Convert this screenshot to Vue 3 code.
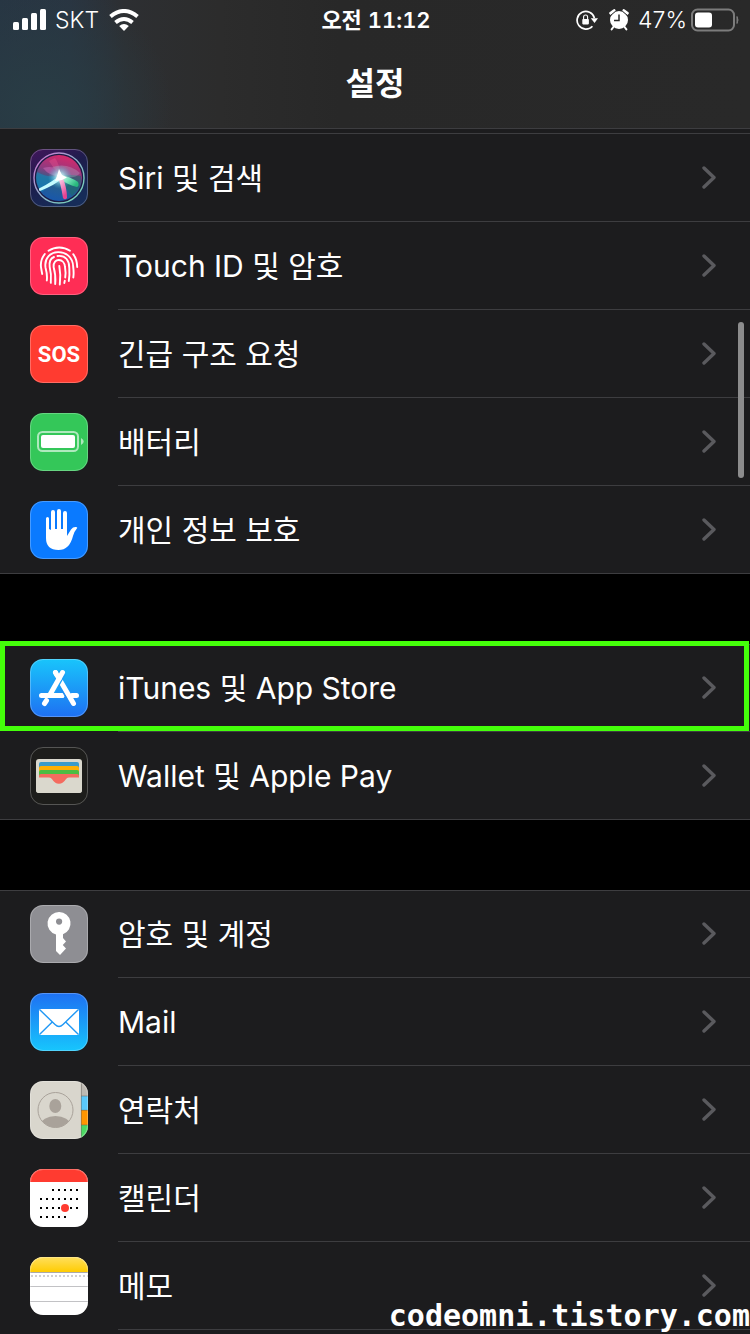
<script setup>
const groups = [
  [
    { id: 'siri', label: 'Siri 및 검색' },
    { id: 'touch', label: 'Touch ID 및 암호' },
    { id: 'sos', label: '긴급 구조 요청' },
    { id: 'battery', label: '배터리' },
    { id: 'privacy', label: '개인 정보 보호' }
  ],
  [
    { id: 'store', label: 'iTunes 및 App Store', marked: true },
    { id: 'wallet', label: 'Wallet 및 Apple Pay' }
  ],
  [
    { id: 'key', label: '암호 및 계정' },
    { id: 'mail', label: 'Mail' },
    { id: 'contacts', label: '연락처' },
    { id: 'calendar', label: '캘린더' },
    { id: 'notes', label: '메모' }
  ]
]
const calendarDots = [
  [23, 29, 35, 41, 47],
  [11, 17, 23, 29, 35, 41, 47],
  [11, 17, 23, 29, 41, 47],
  [11, 17, 23, 29, 35]
]
</script>

<template>
  <div class="phone">
    <header class="top">
      <div class="status">
        <div class="side">
          <svg width="34" height="22" viewBox="0 0 34 22" fill="#fff" aria-hidden="true">
            <rect x="0" y="13" width="6" height="8" rx="1.5" />
            <rect x="9" y="9" width="6" height="12" rx="1.5" />
            <rect x="18" y="4" width="6" height="17" rx="1.5" />
            <rect x="27" y="0" width="6" height="21" rx="1.5" />
          </svg>
          <span class="carrier">SKT</span>
          <svg width="30" height="22" viewBox="0 0 30 22" aria-hidden="true">
            <g fill="none" stroke="#fff" stroke-width="4">
              <path d="M1.5 7.5 Q15 -3.5 28.5 7.5" />
              <path d="M6.5 13.5 Q15 6.5 23.5 13.5" />
            </g>
            <path d="M10.2 17 Q15 13.2 19.8 17 L15 22 Z" fill="#fff" />
          </svg>
        </div>
        <time class="clock">오전 11:12</time>
        <div class="side right">
          <svg class="lock" width="22" height="22" viewBox="0 0 22 22" aria-hidden="true">
            <path d="M16.4 17.2 A8.8 8.8 0 1 1 18.4 9" fill="none" stroke="#fff" stroke-width="1.7" />
            <path d="M14.8 9.2 H22 L18.5 14 Z" fill="#fff" />
            <rect x="6.3" y="10" width="6.6" height="5.4" rx="0.8" fill="#fff" />
            <path d="M7.6 10 V8 A2 2 0 0 1 11.6 8 V10" fill="none" stroke="#fff" stroke-width="1.1" />
          </svg>
          <svg class="alarm" width="20" height="22" viewBox="0 0 20 22" aria-hidden="true">
            <circle cx="10" cy="11" r="9" fill="#fff" />
            <path d="M1.8 4.2 L5.2 1.8 M18.2 4.2 L14.8 1.8" stroke="#fff" stroke-width="3.2" stroke-linecap="round" />
            <path d="M1.2 6.8 L7 1.8 M18.8 6.8 L13 1.8" stroke="#292929" stroke-width="1" />
            <path d="M4.4 18 L2.6 20.4 M15.6 18 L17.4 20.4" stroke="#fff" stroke-width="2" stroke-linecap="round" />
            <path d="M10 5.5 V11.5 H5" fill="none" stroke="#292929" stroke-width="1.5" />
          </svg>
          <span class="carrier">47%</span>
          <svg class="cell" width="48" height="24" viewBox="0 0 48 24" aria-hidden="true">
            <rect x="1" y="1.5" width="42" height="21" rx="5.5" fill="none" stroke="#7c7c7c" stroke-width="2" />
            <rect x="4" y="4.5" width="17" height="15" rx="3" fill="#fff" />
            <path d="M46 8.5 Q48 12 46 15.5 Z" fill="#7c7c7c" stroke="#7c7c7c" />
          </svg>
        </div>
      </div>
      <h1>설정</h1>
    </header>

    <main>
      <div class="peek"></div>
      <ul v-for="(group, g) in groups" :key="g" class="group">
        <li v-for="row in group" :key="row.id" :class="{ marked: row.marked }">
          <a href="#" class="row">
            <svg class="icon" viewBox="0 0 58 58" aria-hidden="true">
              <g v-if="row.id === 'siri'">
                <defs>
                  <linearGradient id="siriBack" x1="0" y1="0" x2="0.5" y2="1">
                    <stop offset="0" stop-color="#43155c" /><stop offset="0.5" stop-color="#1d1d4c" /><stop offset="1" stop-color="#162c58" />
                  </linearGradient>
                  <linearGradient id="siriOrb" x1="0.6" y1="0" x2="0.35" y2="1">
                    <stop offset="0" stop-color="#d8286a" /><stop offset="0.36" stop-color="#8f3a80" /><stop offset="0.58" stop-color="#2b6088" /><stop offset="1" stop-color="#1757ad" />
                  </linearGradient>
                  <linearGradient id="siriRing" x1="0" y1="0" x2="1" y2="1">
                    <stop offset="0" stop-color="#d56ad0" /><stop offset="0.5" stop-color="#8fb2cc" /><stop offset="1" stop-color="#6fd9b0" />
                  </linearGradient>
                  <radialGradient id="siriGlow">
                    <stop offset="0" stop-color="#fff" /><stop offset="0.3" stop-color="#b9f4f6" stop-opacity="0.8" /><stop offset="1" stop-color="#39b9d8" stop-opacity="0" />
                  </radialGradient>
                  <linearGradient id="siriGreen" x1="0" y1="0" x2="1" y2="0.6">
                    <stop offset="0" stop-color="#fff" /><stop offset="0.55" stop-color="#7fe6c0" /><stop offset="1" stop-color="#28b97d" />
                  </linearGradient>
                  <linearGradient id="siriPink" x1="0" y1="0" x2="0.4" y2="1">
                    <stop offset="0" stop-color="#fff" /><stop offset="0.5" stop-color="#f5a0cc" /><stop offset="1" stop-color="#e84292" />
                  </linearGradient>
                </defs>
                <rect width="58" height="58" rx="13" fill="url(#siriBack)" />
                <circle cx="29" cy="29" r="25" fill="#1b1a44" stroke="url(#siriRing)" stroke-width="1.4" />
                <circle cx="29" cy="29" r="23" fill="url(#siriOrb)" />
                <path d="M30 27 Q40 25 51 27 Q52 38 42 47 Q36 40 30 27" fill="#1c6a6c" opacity="0.6" />
                <path d="M30 27 Q18 29 7 23 Q4 34 12 43 Z" fill="#1588bd" opacity="0.6" />
                <path d="M13 19 Q27 15 31 27 Q20 28 13 19" fill="#c96ab4" opacity="0.55" />
                <path d="M19 12 Q24 20 30 27 Q30 15 25 9 Z" fill="#f05a96" opacity="0.35" />
                <path d="M22 18 Q38 13 50 24 Q46 30 31 28 Q30 21 22 18" fill="#c0b8cc" opacity="0.3" />
                <circle cx="30" cy="28" r="12" fill="url(#siriGlow)" />
                <path d="M31 25 Q24 32 9 39.5 Q8.5 41.5 10 42 Q25 36 33 29 Z" fill="#c4fbff" />
                <path d="M28 25 Q41 28 48 33 Q49.5 37 47 38 Q38 36 28 29 Z" fill="url(#siriGreen)" />
                <path d="M27 26 Q31 35 33 49 Q35 51.5 37 49 Q37 38 32 27 Z" fill="url(#siriPink)" />
                <path d="M29 20 L32 26 L37 28.5 L32 31 L25 32 L27 27 Z" fill="#fff" />
              </g>
              <g v-else-if="row.id === 'touch'">
                <rect width="58" height="58" rx="13" fill="#ff2d55" />
                <g fill="none" stroke="#fff" stroke-width="1.9" stroke-linecap="round">
                  <path d="M18.5 13.8 A19 19 0 0 1 40 13.8" />
                  <path d="M14.8 17 Q9.5 24 11.3 32 L12.2 37" />
                  <path d="M43.2 17.2 Q47 22 47.2 30" />
                  <path d="M16.8 43.5 Q17.5 38 15.6 31 C12 10.5 43 9.5 43.2 30 Q44 36 43.3 40.5" />
                  <path d="M20.8 45.8 Q21.6 37 19.7 30 Q18.7 22 24 20" />
                  <path d="M27.5 19 C36 18 39.3 24 39.3 31 Q39.8 38 38.8 44" />
                  <path d="M25.2 47 Q26 38 23.6 30 C23 20.5 34.5 21 35 30 Q36 36 35.2 40.5 M34.8 43.8 L34.3 46" />
                  <path d="M29.8 47.5 Q31 38 29.3 29" />
                </g>
              </g>
              <g v-else-if="row.id === 'sos'">
                <rect width="58" height="58" rx="13" fill="#ff3b30" />
                <text x="29" y="37" text-anchor="middle" class="sos">SOS</text>
              </g>
              <g v-else-if="row.id === 'battery'">
                <rect width="58" height="58" rx="13" fill="#34c759" />
                <rect x="8" y="19" width="40" height="19" rx="4.5" fill="none" stroke="#aee9bd" stroke-width="2" />
                <rect x="11" y="22" width="34" height="13" rx="2" fill="#fff" />
                <path d="M51 25 Q56.5 28.5 51 32 Z" fill="#aee9bd" />
              </g>
              <g v-else-if="row.id === 'privacy'">
                <rect width="58" height="58" rx="13" fill="#0a7aff" />
                <path d="M16 37 V17.5 A1.5 1.5 0 0 1 19 17.5 V28 L21 29 V11 A2 2 0 0 1 25 11 V28 H27 V10 A2 2 0 0 1 31 10 V28 H33 V12 A2 2 0 0 1 37 12 V35 L41 28.5 Q43.5 25.3 47 26.3 Q47.7 27 46.5 28 Q44.5 30 43 35 Q39.5 49 28.5 49 Q16 49 16 37 Z" fill="#fff" />
              </g>
              <g v-else-if="row.id === 'store'">
                <defs>
                  <linearGradient id="storeBack" x1="0" y1="0" x2="0" y2="1"><stop offset="0" stop-color="#19c5fb" /><stop offset="1" stop-color="#1e70f2" /></linearGradient>
                </defs>
                <rect width="58" height="58" rx="13" fill="url(#storeBack)" />
                <g fill="none" stroke="#fff" stroke-width="5" stroke-linecap="round">
                  <path d="M11.5 36.5 H32 M42 36.5 H46.5" />
                  <path d="M16.5 41.5 L14.5 44.5" />
                  <path d="M25.5 13.5 L43.5 44.5" />
                </g>
                <path d="M32.5 13.5 L20.5 34.5" stroke="#1b9ff7" stroke-width="7.6" />
                <path d="M25.5 13.5 L29 19.5" stroke="#fff" stroke-width="5" stroke-linecap="round" />
                <path d="M32.5 13.5 L19.5 36.5 H32" fill="none" stroke="#fff" stroke-width="5" stroke-linecap="round" />
                <path d="M31.5 30.8 L37 40.2" stroke="#1c8bf5" stroke-width="1.2" />
              </g>
              <g v-else-if="row.id === 'wallet'">
                <rect width="58" height="58" rx="13" fill="#1d1d1b" />
                <rect x="6" y="12" width="46" height="34" rx="3" fill="#dad8cd" />
                <path d="M9 31 V17 Q9 15 11 15 H47 Q49 15 49 17 V31 Z" fill="#3b9bca" />
                <path d="M9 31 V21 Q9 19 11 19 H47 Q49 19 49 21 V31 Z" fill="#ffb003" />
                <path d="M9 31 V25 Q9 23 11 23 H47 Q49 23 49 25 V31 Z" fill="#4dbd43" />
                <path d="M9 31 V29 Q9 27 11 27 H47 Q49 27 49 29 V37 H9 Z" fill="#f46b5f" />
                <path d="M6 30.5 H19 C23 30.5 23 36.8 29 36.8 C35 36.8 35 30.5 39 30.5 H52 V43 Q52 46 49 46 H9 Q6 46 6 43 Z" fill="#dad8cd" />
              </g>
              <g v-else-if="row.id === 'key'">
                <rect width="58" height="58" rx="13" fill="#8e8e93" />
                <path d="M29.3 7 A11.5 11.5 0 0 0 26 29.6 V46 L30 50 L36 43.5 L32.8 40 L36 36.5 L33 33 V29.3 A11.5 11.5 0 0 0 29.3 7 Z M29.1 13.5 A3.1 3.1 0 1 1 29.1 19.7 A3.1 3.1 0 1 1 29.1 13.5 Z" fill="#fff" fill-rule="evenodd" />
              </g>
              <g v-else-if="row.id === 'mail'">
                <defs>
                  <linearGradient id="mailBack" x1="0" y1="0" x2="0" y2="1"><stop offset="0" stop-color="#1e70f2" /><stop offset="1" stop-color="#17c6fd" /></linearGradient>
                </defs>
                <rect width="58" height="58" rx="13" fill="url(#mailBack)" />
                <rect x="9" y="16" width="40" height="26" rx="1.5" fill="#fff" />
                <path d="M9.5 16.5 L25 31.5 Q29 35.5 33 31.5 L48.5 16.5 M9.5 41.5 L22 29.3 M48.5 41.5 L36 29.3" fill="none" stroke="#2098f5" stroke-width="1.4" />
              </g>
              <g v-else-if="row.id === 'contacts'">
                <defs>
                  <clipPath id="tile"><rect width="58" height="58" rx="13" /></clipPath>
                  <clipPath id="face"><circle cx="25.5" cy="29" r="17.5" /></clipPath>
                </defs>
                <g clip-path="url(#tile)">
                  <rect width="58" height="58" fill="#d9d6cd" />
                  <rect x="51" width="7" height="15" fill="#bdb9b2" />
                  <rect x="51" y="15" width="7" height="14" fill="#5ac8fa" />
                  <rect x="51" y="29" width="7" height="15" fill="#ff9500" />
                  <rect x="51" y="44" width="7" height="14" fill="#4cd964" />
                  <path d="M51.4 0 V58 M51 15 H58 M51 29.3 H58 M51 44 H58" stroke="#68645c" stroke-opacity="0.5" />
                </g>
                <circle cx="25.5" cy="29" r="17.5" fill="none" stroke="#a9a29a" />
                <g clip-path="url(#face)" fill="#a9a29a">
                  <ellipse cx="25.3" cy="25" rx="6" ry="7" />
                  <ellipse cx="25.5" cy="44" rx="15" ry="9" />
                </g>
              </g>
              <g v-else-if="row.id === 'calendar'">
                <rect width="58" height="58" rx="13" fill="#fff" />
                <path d="M0 13 A13 13 0 0 1 13 0 H45 A13 13 0 0 1 58 13 Z" fill="#ff3b30" />
                <g v-for="(line, i) in calendarDots" :key="i">
                  <rect v-for="x in line" :key="x" :x="x - 1" :y="20 + i * 9" width="2" height="2" fill="#000" />
                </g>
                <circle cx="35" cy="39" r="4" fill="#ff3b30" />
              </g>
              <g v-else>
                <defs>
                  <linearGradient id="noteTop" x1="0" y1="0" x2="0" y2="1"><stop offset="0" stop-color="#ffdf5e" /><stop offset="1" stop-color="#ffcc02" /></linearGradient>
                </defs>
                <rect width="58" height="58" rx="13" fill="#fff" />
                <path d="M0 15 V13 A13 13 0 0 1 13 0 H45 A13 13 0 0 1 58 13 V15 Z" fill="url(#noteTop)" />
                <path d="M0 15.5 H58" stroke="#a9a9ac" />
                <path d="M1 19 H58" stroke="#cfcfd2" stroke-width="2" stroke-dasharray="2 2" />
                <path d="M0 29.5 H58 M0 44.5 H58" stroke="#c2c2c5" />
              </g>
              <rect x="0.5" y="0.5" width="57" height="57" rx="12.5" fill="none" stroke="#fff" stroke-opacity="0.25" />
            </svg>
            <span class="body">
              <span class="label">{{ row.label }}</span>
              <svg class="chevron" width="16" height="24" viewBox="0 0 16 24" aria-hidden="true">
                <path d="M3 2 L13 11.5 L3 21" fill="none" stroke="#5a5a5e" stroke-width="3.4" stroke-linecap="round" stroke-linejoin="round" />
              </svg>
            </span>
          </a>
        </li>
      </ul>
      <div class="thumb"></div>
    </main>
    <div class="watermark">codeomni.tistory.com</div>
  </div>
</template>

<style>
body {
  background: #000;
}
</style>

<style scoped>
.phone {
  position: relative;
  display: flex;
  flex-direction: column;
  height: 100vh;
  overflow: hidden;
  color: #fff;
  font-family: Inter, "Noto Sans CJK KR", sans-serif;
}
.top {
  flex: none;
  border-bottom: 1px solid #3d3d40;
  background:
    radial-gradient(ellipse 130px 130px at 42px 110px, #293d45 0%, #293c4480 55%, transparent 100%),
    linear-gradient(90deg, #273543 0, #293441 70px, #2d2f32 125px, #2c2c2c 220px, #282828 340px, #292929 100%);
}
.status {
  display: grid;
  grid-template-columns: 1fr auto 1fr;
  align-items: center;
  height: 40px;
  padding: 0 11px 0 13px;
  font-size: 23px;
  line-height: 32px;
}
.side {
  display: flex;
  align-items: center;
  gap: 8px;
}
.side .carrier + svg {
  margin-left: 2px;
}
.right {
  justify-content: flex-end;
  gap: 4px;
}
.side .carrier + .cell {
  margin-left: 0;
}
.lock {
  margin-right: 7px;
}
.alarm {
  margin-right: 5px;
}
.carrier {
  font-weight: 300;
}
.clock {
  font-size: 22px;
  font-weight: 600;
  font-variant-numeric: tabular-nums;
}
h1 {
  margin: 0;
  padding: 22px 0;
  font-size: 32px;
  line-height: 44px;
  font-weight: 600;
  text-align: center;
}
main {
  position: relative;
  flex: 1;
  min-height: 0;
  background: #000;
}
.peek {
  height: 5px;
  box-sizing: border-box;
  background: linear-gradient(#3d3d40, #3d3d40) 118px 100% / 100% 1px no-repeat #1c1c1e;
}
.group {
  margin: 0 0 70px;
  padding: 0;
  list-style: none;
  background: #1c1c1e;
}
.group + .group {
  box-shadow: inset 0 1px #3d3d40;
}
.group li {
  position: relative;
}
.row {
  display: flex;
  align-items: center;
  gap: 30px;
  padding-left: 30px;
  color: inherit;
  text-decoration: none;
}
.icon {
  flex: none;
  width: 58px;
  height: 58px;
}
.body {
  flex: 1;
  display: flex;
  align-items: center;
  justify-content: space-between;
  box-sizing: border-box;
  height: 88px;
  padding-right: 33px;
  border-bottom: 1px solid #3d3d40;
}
.group li:last-child .body {
  border-bottom-color: transparent;
}
.group li:last-child {
  box-shadow: inset 0 -1px #3d3d40;
}
.group:nth-last-child(2) {
  margin: 0;
  padding-bottom: 20px;
}
.group:nth-last-child(2) li:last-child {
  box-shadow: none;
}
.group:nth-last-child(2) li:last-child .body {
  border-bottom-color: #3d3d40;
}
.label {
  font-size: 30px;
  line-height: 44px;
}
.sos {
  fill: #fff;
  font-family: "Liberation Sans Narrow", Roboto, sans-serif;
  font-size: 22px;
  font-weight: 700;
}
.marked::after {
  content: "";
  position: absolute;
  inset: -3px 1px 1px 0;
  border: 5px solid #44ff0a;
  pointer-events: none;
}
.thumb {
  position: absolute;
  top: 193px;
  right: 6px;
  width: 6px;
  height: 156px;
  border-radius: 3px;
  background: #8c8c8d;
}
.watermark {
  position: absolute;
  right: 0;
  bottom: 0;
  font: 700 30px/36px "DejaVu Sans Mono", monospace;
}
</style>
